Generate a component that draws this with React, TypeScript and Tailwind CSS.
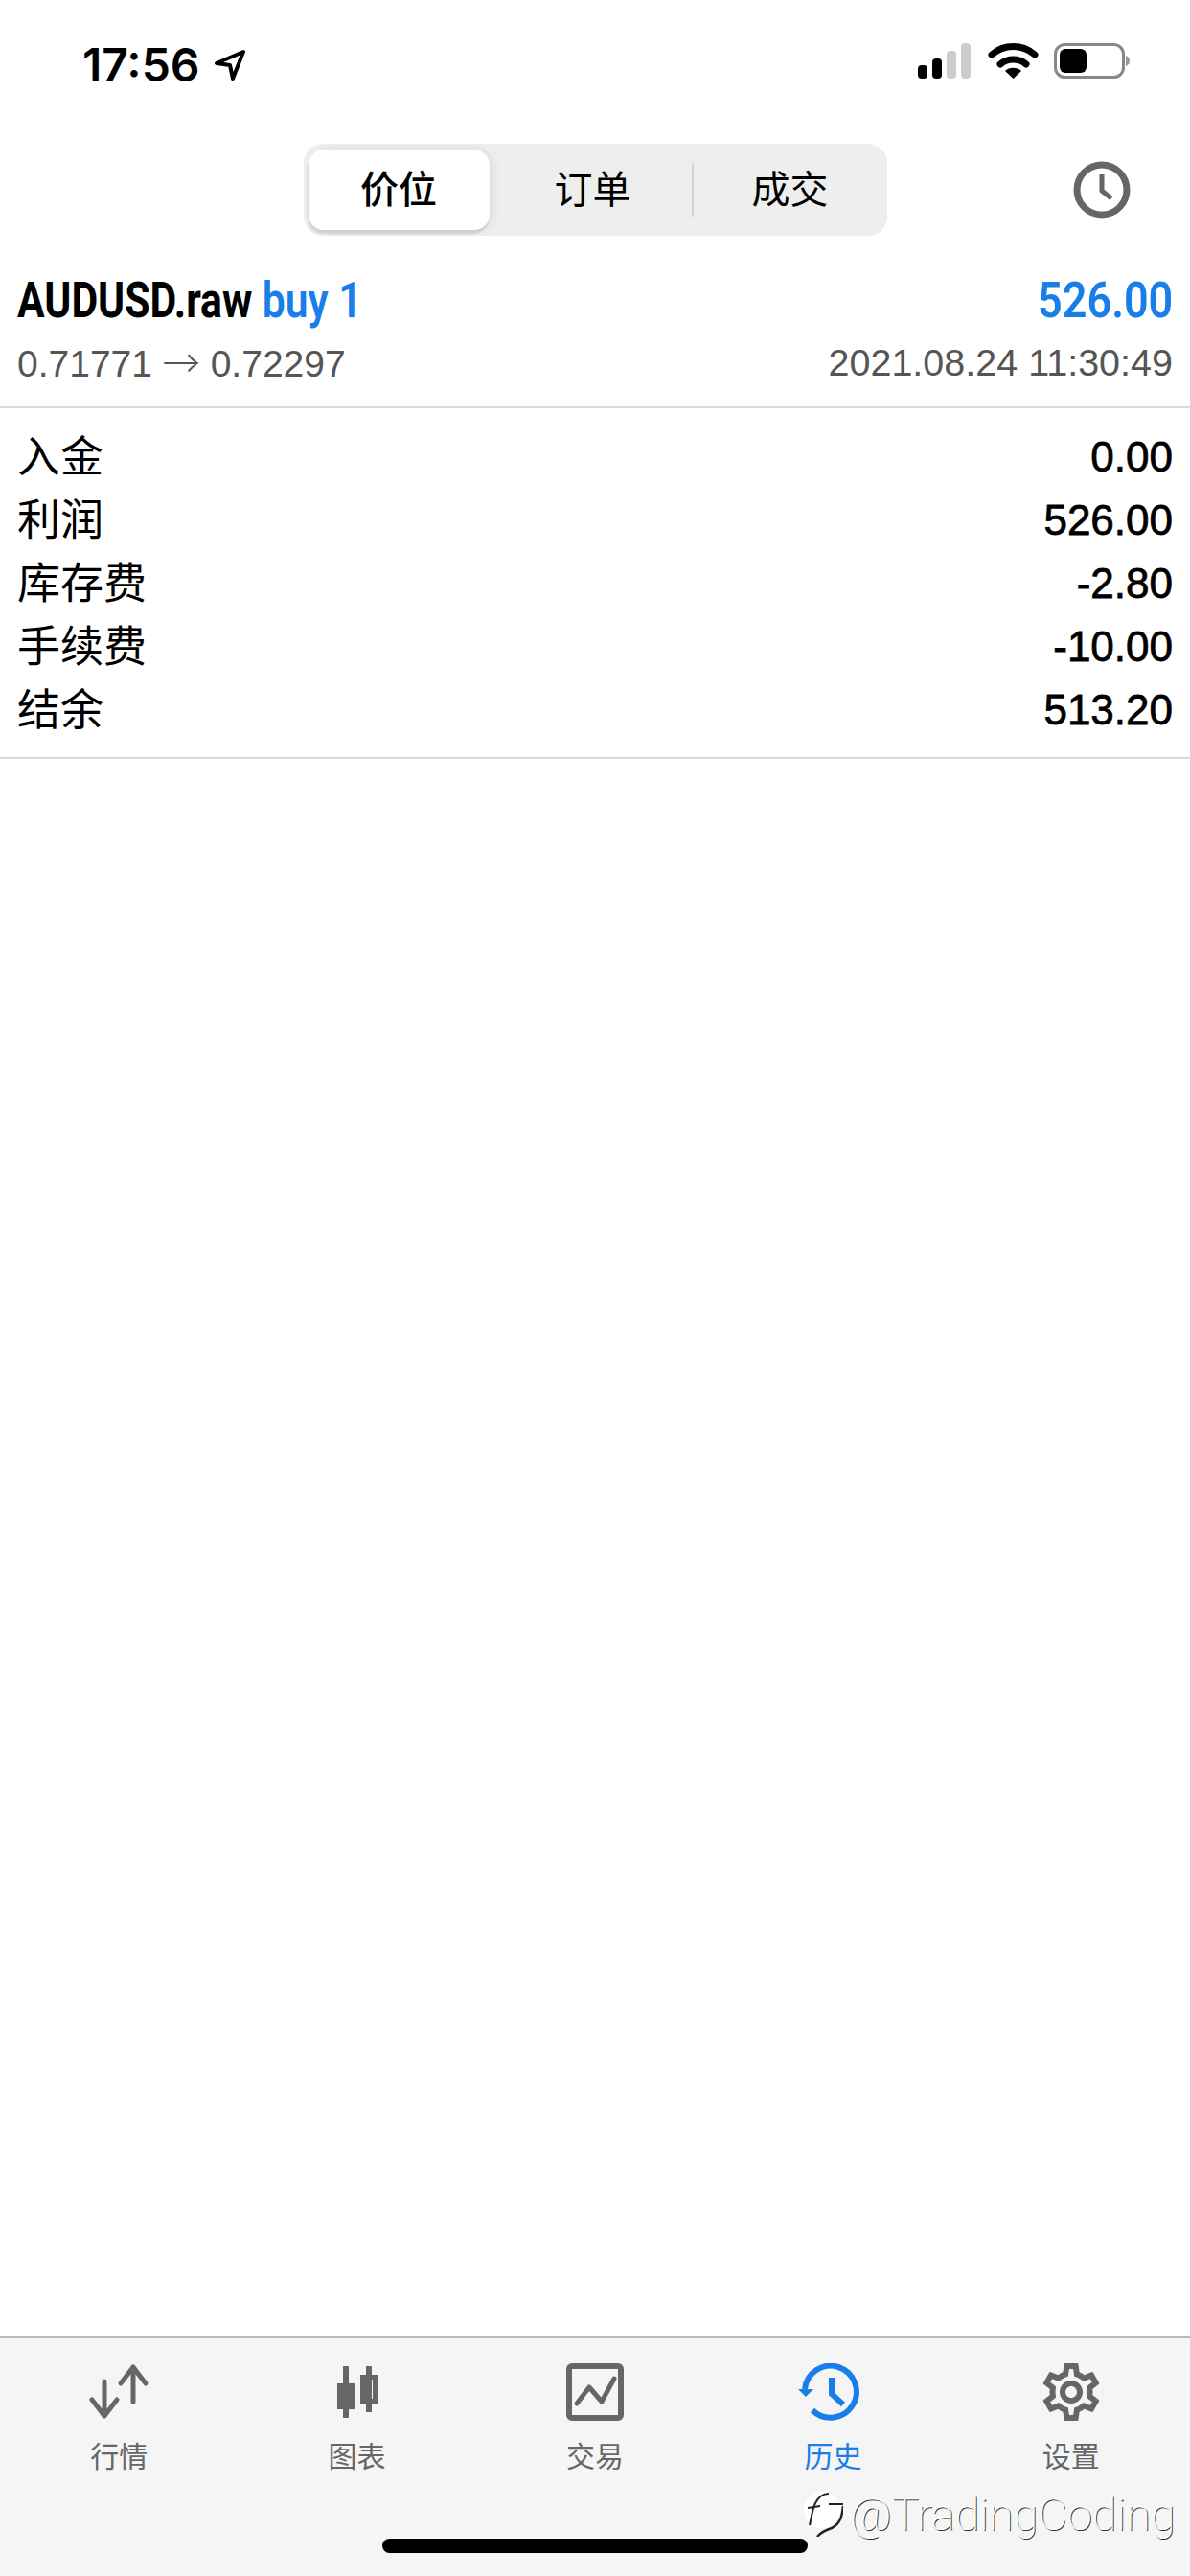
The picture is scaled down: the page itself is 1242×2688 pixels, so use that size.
import { MdOutlineSettings } from "react-icons/md";

const cjk = "font-['Inter','Noto_Sans_CJK_SC',sans-serif]";

const rows = [
  ["入金", "0.00"],
  ["利润", "526.00"],
  ["库存费", "-2.80"],
  ["手续费", "-10.00"],
  ["结余", "513.20"],
];

function StatusBar() {
  return (
    <div className="flex h-[150px] items-start justify-between pl-[86px] pr-[63px] pt-[44px]">
      <div className="flex items-center gap-[14px]">
        <span className="font-['Inter',sans-serif] text-[48px] font-semibold leading-[48px] text-black">17:56</span>
        <svg width="34" height="34" viewBox="0 0 34 34" fill="none" stroke="#000" strokeWidth="4" strokeLinejoin="round">
          <path d="M31 3 3 15l14 2 3 14z" />
        </svg>
      </div>
      <div className="flex items-start">
        <svg width="222" height="40" viewBox="0 0 222 40">
          <rect x="1" y="24" width="10" height="14" rx="4" fill="#000" />
          <rect x="16" y="17" width="10" height="21" rx="4" fill="#000" />
          <rect x="31" y="9" width="10" height="29" rx="4" fill="#ccc" />
          <rect x="46" y="1" width="10" height="37" rx="4" fill="#ccc" />
          <path d="M78 13a34 34 0 0 1 45 0" fill="none" stroke="#000" strokeWidth="7" strokeLinecap="round" />
          <path d="M87 23a21 21 0 0 1 27 0" fill="none" stroke="#000" strokeWidth="7" strokeLinecap="round" />
          <path d="M92 30a13 13 0 0 1 17 0l-8.500 8z" fill="#000" />
          <rect x="144.500" y="2.500" width="71" height="34" rx="10" fill="none" stroke="#888" strokeWidth="3" />
          <rect x="149" y="7" width="28" height="25" rx="6" fill="#000" />
          <path d="M218 14c3 1 4 3 4 5.500s-1 4.500-4 5.500z" fill="#999" />
        </svg>
      </div>
    </div>
  );
}

function Segments() {
  return (
    <div className="relative flex h-[96px] items-center justify-center">
      <div className={`flex h-[96px] w-[609px] items-center rounded-[20px] bg-[#eeeeee] pl-[5px] text-[40px] text-black ${cjk}`}>
        <div className="flex h-[84px] w-[189px] items-center justify-center rounded-[16px] bg-white font-medium shadow-[-1px_4px_2px_rgba(0,0,0,0.1),4px_0_10px_rgba(0,0,0,0.07)]">价位</div>
        <div className="flex h-[84px] w-[211px] items-center justify-center pl-[5px]">订单</div>
        <div className="h-[56px] w-[2px] bg-[#d4d4d4]" />
        <div className="flex h-[84px] flex-1 items-center justify-center">成交</div>
      </div>
      <svg className="absolute right-[62px] top-[18px]" width="60" height="60" viewBox="0 0 60 60" fill="none" stroke="#666" strokeWidth="7">
        <circle cx="30" cy="30" r="26" />
        <path d="M30 14v17l10 8" strokeWidth="5" />
      </svg>
    </div>
  );
}

function Trade() {
  return (
    <div className="h-[180px] border-b-2 border-[#d9d9d9] px-[18px] pt-[40px]">
      <div className="flex items-center justify-between">
        <div className="origin-left scale-x-[0.82] whitespace-nowrap font-['Roboto',sans-serif] text-[52px] font-bold leading-[56px] text-black">
          AUDUSD.raw <span className="font-semibold text-[#1a7ee8]">buy 1</span>
        </div>
        <div className="origin-right scale-x-[0.865] font-['Roboto',sans-serif] text-[52px] font-semibold leading-[56px] text-[#1a7ee8]">526.00</div>
      </div>
      <div className="mt-[9px] flex items-center justify-between font-['Liberation_Sans',sans-serif] leading-[50px] text-[#555555]">
        <span className="text-[39px]">
          0.71771 <span className="font-['Noto_Sans_CJK_SC',sans-serif] font-light">→</span> 0.72297
        </span>
        <span className="text-[39.5px]">2021.08.24 11:30:49</span>
      </div>
    </div>
  );
}

function Summary() {
  return (
    <div className="border-b-2 border-[#d9d9d9] px-[18px] pb-[16px] pt-[18px]">
      {rows.map(([label, value]) => (
        <div key={label} className="flex h-[66px] items-center justify-between text-[45px] text-black">
          <span className={cjk}>{label}</span>
          <span className="font-['Liberation_Sans',sans-serif] text-[44px] [-webkit-text-stroke:0.8px_#000]">{value}</span>
        </div>
      ))}
    </div>
  );
}

const iconGray = "#666666";

function TabBar() {
  const tabs = [
    {
      label: "行情",
      icon: (
        <svg width="72" height="60" viewBox="0 0 72 60" fill="none" stroke={iconGray} strokeWidth="5" strokeLinecap="round" strokeLinejoin="round">
          <path d="M51 40V4M38 21 51 4l13 17" />
          <path d="M21 19v36M8 38l13 17 13-17" />
        </svg>
      ),
    },
    {
      label: "图表",
      icon: (
        <svg width="60" height="60" viewBox="-5 0 60 60" fill={iconGray}>
          <rect x="10" y="3" width="6" height="54" />
          <rect x="4" y="21" width="19" height="27" />
          <rect x="34" y="3" width="6" height="48" />
          <path fillRule="evenodd" d="M28 12h19v30H28zm6 5v20h7V17z" />
        </svg>
      ),
    },
    {
      label: "交易",
      icon: (
        <svg width="60" height="60" viewBox="0 0 60 60" fill="none" stroke={iconGray} strokeLinecap="round" strokeLinejoin="round">
          <rect x="3" y="3" width="54" height="54" rx="3" strokeWidth="6" />
          <path d="M11 42 24 25l13 15 13-24" strokeWidth="5" />
        </svg>
      ),
    },
    {
      label: "历史",
      active: true,
      icon: (
        <svg width="72" height="60" viewBox="0 0 72 60" fill="none" stroke="#1a7ee8" strokeWidth="6">
          <path d="M7 27A27 27 0 1 1 15 49" />
          <path d="M0 27h16l-8 8z" fill="#1a7ee8" stroke="none" />
          <path d="M35 15v17l12 11" />
        </svg>
      ),
    },
    {
      label: "设置",
      icon: <MdOutlineSettings size={72} color={iconGray} className="-my-[6px]" />,
    },
  ];

  return (
    <div className="absolute inset-x-0 bottom-0 h-[250px] border-t-2 border-[#b8b8b8] bg-[#f5f5f5] pt-[26px]">
      <div className="grid grid-cols-5">
        {tabs.map((tab) => (
          <div key={tab.label} className="flex flex-col items-center">
            <div className="flex h-[60px] items-center">{tab.icon}</div>
            <span className={`mt-[20px] text-[30px] leading-[34px] ${cjk} ${tab.active ? "text-[#1a7ee8]" : "text-[#666666]"}`}>{tab.label}</span>
          </div>
        ))}
      </div>
    </div>
  );
}

function Watermark() {
  return (
    <div className="absolute bottom-[41px] left-[838px] flex items-center gap-[7px] whitespace-nowrap">
      <svg width="42" height="47" viewBox="0 0 42 47" fill="none" stroke="#222">
        <circle cx="20" cy="19" r="19" fill="#fff" stroke="none" />
        <path d="M7 35c2-9 3-17 6-23 3-6 8-10 14-10" strokeWidth="2" />
        <path d="M5 17l13-2M27 13h15" strokeWidth="2" />
        <path d="M42 15c-1 10-3 19-12 23-6 2-11 4-15 9" strokeWidth="2.500" />
      </svg>
      <span className="font-['Roboto',sans-serif] text-[47px] font-thin leading-[47px] text-white [text-shadow:1px_1px_0_#333]">@TradingCoding</span>
    </div>
  );
}

export default function App() {
  return (
    <div className="relative h-[2688px] w-[1242px] overflow-hidden bg-white">
      <StatusBar />
      <Segments />
      <Trade />
      <Summary />
      <TabBar />
      <Watermark />
      <div className="absolute bottom-[24px] left-[399px] h-[15px] w-[444px] rounded-full bg-black" />
    </div>
  );
}
